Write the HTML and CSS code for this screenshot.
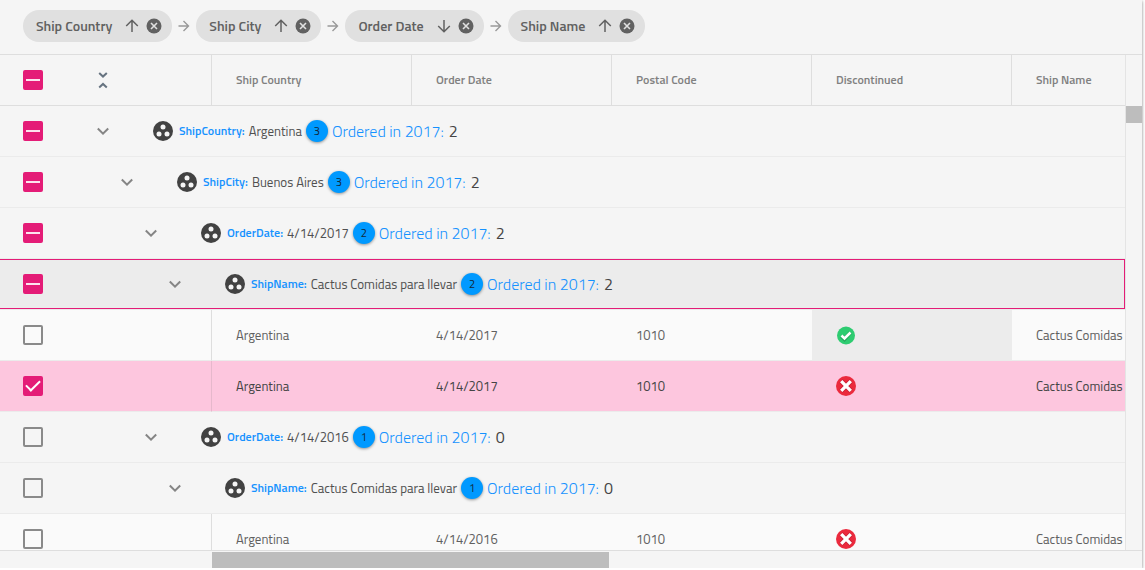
FILE: index.html
```html
<!DOCTYPE html>
<html lang="en">
<head>
<meta charset="utf-8">
<title>Orders</title>
<link rel="stylesheet" href="styles.css">
</head>
<body>
<svg class="sprite" aria-hidden="true">
  <symbol id="up" viewBox="0 0 16 16"><path d="M8 14V2.500M2.200 8 8 2.200l5.800 5.800" fill="none" stroke="currentColor" stroke-width="1.500"/></symbol>
  <symbol id="down" viewBox="0 0 16 16"><path d="M8 2v11.500M2.200 8 8 13.800l5.800-5.800" fill="none" stroke="currentColor" stroke-width="1.500"/></symbol>
  <symbol id="next" viewBox="0 0 12 12"><path d="M.5 6h10M5.500 1l5 5-5 5" fill="none" stroke="currentColor" stroke-width="1.400"/></symbol>
  <symbol id="close" viewBox="0 0 16 16"><circle cx="8" cy="8" r="7.500" fill="currentColor"/><path d="m5 5 6 6M11 5l-6 6" stroke="#e0e0e0" stroke-width="1.600"/></symbol>
  <symbol id="chevron" viewBox="0 0 24 24"><path d="m6.800 9.500 5.200 5.200 5.200-5.200" fill="none" stroke="currentColor" stroke-width="2"/></symbol>
  <symbol id="fold" viewBox="0 0 24 24"><path d="m8.200 5 3.800 3.600 3.800-3.600M8.200 19.500l3.800-3.600 3.800 3.600" fill="none" stroke="currentColor" stroke-width="2"/></symbol>
  <symbol id="group" viewBox="0 0 20 20"><circle cx="10" cy="10" r="10" fill="#424242"/><g fill="#f5f5f5"><circle cx="10" cy="6" r="2.500"/><circle cx="6" cy="13" r="2.500"/><circle cx="14" cy="13" r="2.500"/></g></symbol>
  <symbol id="yes" viewBox="0 0 20 20"><circle cx="10" cy="10.500" r="9" fill="#2ecc71"/><path d="m5.500 11 3 3 6-6.500" fill="none" stroke="#24a65b" stroke-width="4"/><path d="m5.500 10.500 3 3 6-6" fill="none" stroke="#fff" stroke-width="2.600"/></symbol>
  <symbol id="no" viewBox="0 0 20 20"><circle cx="10" cy="10" r="10" fill="#eb2a3d"/><path d="m5 5 10 10M15 5l-10 10" stroke="#c91f35" stroke-width="4.600"/><path d="m5.200 5.200 9.600 9.600M14.800 5.200l-9.600 9.600" stroke="#fff" stroke-width="3.300"/></symbol>
</svg>

<main class="grid">
  <div class="group-area">
    <div class="chip"><span>Ship Country</span><button aria-label="Sort Ship Country"><svg class="i16"><use href="#up"/></svg></button><button aria-label="Remove Ship Country"><svg class="i16"><use href="#close"/></svg></button></div>
    <svg class="next"><use href="#next"/></svg>
    <div class="chip"><span>Ship City</span><button aria-label="Sort Ship City"><svg class="i16"><use href="#up"/></svg></button><button aria-label="Remove Ship City"><svg class="i16"><use href="#close"/></svg></button></div>
    <svg class="next"><use href="#next"/></svg>
    <div class="chip"><span>Order Date</span><button aria-label="Sort Order Date"><svg class="i16"><use href="#down"/></svg></button><button aria-label="Remove Order Date"><svg class="i16"><use href="#close"/></svg></button></div>
    <svg class="next"><use href="#next"/></svg>
    <div class="chip"><span>Ship Name</span><button aria-label="Sort Ship Name"><svg class="i16"><use href="#up"/></svg></button><button aria-label="Remove Ship Name"><svg class="i16"><use href="#close"/></svg></button></div>
  </div>

  <div class="body">
    <div class="viewport">
      <table>
        <colgroup><col class="col-select"><col class="col-data"><col class="col-data"><col class="col-data"><col class="col-data"><col></colgroup>
        <thead>
          <tr>
            <th><div class="line"><input type="checkbox" class="partial" aria-label="Select all"><button class="toggle" aria-label="Collapse all groups"><svg class="i24"><use href="#fold"/></svg></button></div></th>
            <th>Ship Country</th><th>Order Date</th><th>Postal Code</th><th>Discontinued</th><th>Ship Name</th>
          </tr>
        </thead>
        <tbody>
          <tr class="group"><td colspan="6"><div class="line"><input type="checkbox" class="partial" aria-label="Select Argentina"><button class="toggle level-1" aria-label="Collapse"><svg class="i24"><use href="#chevron"/></svg></button><svg class="group-icon"><use href="#group"/></svg><span class="field">ShipCountry:</span><span class="value">Argentina</span><span class="badge">3</span><span class="summary"><span>Ordered in 2017:</span> 2</span></div></td></tr>
          <tr class="group"><td colspan="6"><div class="line"><input type="checkbox" class="partial" aria-label="Select Buenos Aires"><button class="toggle level-2" aria-label="Collapse"><svg class="i24"><use href="#chevron"/></svg></button><svg class="group-icon"><use href="#group"/></svg><span class="field">ShipCity:</span><span class="value">Buenos Aires</span><span class="badge">3</span><span class="summary"><span>Ordered in 2017:</span> 2</span></div></td></tr>
          <tr class="group"><td colspan="6"><div class="line"><input type="checkbox" class="partial" aria-label="Select 4/14/2017"><button class="toggle level-3" aria-label="Collapse"><svg class="i24"><use href="#chevron"/></svg></button><svg class="group-icon"><use href="#group"/></svg><span class="field">OrderDate:</span><span class="value">4/14/2017</span><span class="badge">2</span><span class="summary"><span>Ordered in 2017:</span> 2</span></div></td></tr>
          <tr class="group"><td colspan="6"><div class="line focused"><input type="checkbox" class="partial" aria-label="Select Cactus Comidas para llevar"><button class="toggle level-4" aria-label="Collapse"><svg class="i24"><use href="#chevron"/></svg></button><svg class="group-icon"><use href="#group"/></svg><span class="field">ShipName:</span><span class="value">Cactus Comidas para llevar</span><span class="badge">2</span><span class="summary"><span>Ordered in 2017:</span> 2</span></div></td></tr>
          <tr class="record"><td><div class="line"><input type="checkbox" aria-label="Select row"></div></td><td>Argentina</td><td>4/14/2017</td><td>1010</td><td class="active"><svg class="status" role="img" aria-label="Yes"><use href="#yes"/></svg></td><td>Cactus Comidas</td></tr>
          <tr class="record selected"><td><div class="line"><input type="checkbox" checked aria-label="Select row"></div></td><td>Argentina</td><td>4/14/2017</td><td>1010</td><td><svg class="status" role="img" aria-label="No"><use href="#no"/></svg></td><td>Cactus Comidas</td></tr>
          <tr class="group"><td colspan="6"><div class="line"><input type="checkbox" aria-label="Select 4/14/2016"><button class="toggle level-3" aria-label="Collapse"><svg class="i24"><use href="#chevron"/></svg></button><svg class="group-icon"><use href="#group"/></svg><span class="field">OrderDate:</span><span class="value">4/14/2016</span><span class="badge">1</span><span class="summary"><span>Ordered in 2017:</span> 0</span></div></td></tr>
          <tr class="group"><td colspan="6"><div class="line"><input type="checkbox" aria-label="Select Cactus Comidas para llevar"><button class="toggle level-4" aria-label="Collapse"><svg class="i24"><use href="#chevron"/></svg></button><svg class="group-icon"><use href="#group"/></svg><span class="field">ShipName:</span><span class="value">Cactus Comidas para llevar</span><span class="badge">1</span><span class="summary"><span>Ordered in 2017:</span> 0</span></div></td></tr>
          <tr class="record"><td><div class="line"><input type="checkbox" aria-label="Select row"></div></td><td>Argentina</td><td>4/14/2016</td><td>1010</td><td><svg class="status" role="img" aria-label="No"><use href="#no"/></svg></td><td>Cactus Comidas</td></tr>
        </tbody>
      </table>
    </div>
    <div class="scroll-y"><div class="thumb-y"></div></div>
  </div>
  <div class="scroll-x"><div class="track-x"><div class="thumb-x"></div></div></div>
</main>
</body>
</html>
```

FILE: styles.css
```css
* { box-sizing: border-box; }

body {
  margin: 0;
  background: #fff;
  color: #444;
  font-family: "Titillium Web", Roboto, "Liberation Sans", sans-serif;
  font-size: 13px;
  line-height: 20px;
  overflow: hidden;
}

svg { display: block; flex: none; }
.sprite { position: absolute; width: 0; height: 0; }
.i16 { width: 16px; height: 16px; }
.i24 { width: 24px; height: 24px; }

button {
  padding: 0;
  border: 0;
  background: none;
  color: inherit;
  flex: none;
}

.grid {
  display: flex;
  flex-direction: column;
  height: calc(100vh - 2px);
  margin-right: 3px;
  background: #f5f5f5;
  box-shadow: 0 1px 3px rgba(0, 0, 0, .5);
}

/* Group-by chips */
.group-area {
  display: flex;
  align-items: center;
  padding: 10px 23px 12px;
  border-bottom: 1px solid #dedede;
}
.chip {
  display: flex;
  align-items: center;
  gap: 6px;
  height: 32px;
  padding: 0 10px 0 13px;
  border-radius: 16px;
  background: #e0e0e0;
  color: #616161;
  font-size: 14px;
  font-weight: 600;
}
.chip span { margin-right: 6px; }
.next {
  width: 12px;
  height: 12px;
  margin: 0 6px;
  color: #999;
}

/* Table */
.body {
  display: flex;
  flex: 1;
  min-height: 0;
}
.viewport {
  flex: 1;
  min-width: 0;
  overflow: hidden;
}
table {
  width: 100%;
  table-layout: fixed;
  border-spacing: 0;
}
.col-select { width: 212px; }
.col-data { width: 200px; }
th, td {
  height: 51px;
  padding: 0 0 0 24px;
  text-align: left;
  white-space: nowrap;
  border-bottom: 1px solid #ebebeb;
}
th {
  color: #808080;
  font-size: 12px;
  font-weight: 600;
  border-right: 1px solid #dedede;
  border-bottom-color: #dedede;
}
th:last-child { border-right: 0; }
th:first-child, td:first-child { padding: 0; }

.line {
  display: flex;
  align-items: center;
  height: 50px;
  padding-left: 23px;
}
.focused {
  background: #ececec;
  border: 1px solid #e41c77;
  border-left: 0;
}

.record { background: #fafafa; color: #606060; }
.record td:first-child { border-right: 1px solid #dedede; }
.record .active { background: #ececec; }
.selected { background: #fdc6de; color: #444; }
.selected td:first-child { border-right-color: #e6b8cc; }

input[type="checkbox"] {
  appearance: none;
  display: flex;
  align-items: center;
  justify-content: center;
  flex: none;
  width: 20px;
  height: 20px;
  margin: 0;
  border: 2px solid #8a8a8a;
  border-radius: 2px;
}
input.partial, input[type="checkbox"]:checked {
  border-color: #e41c77;
  background: #e41c77;
}
input.partial::before {
  content: "";
  width: 14px;
  height: 2px;
  background: #fce4ee;
}
input:checked::before {
  content: "";
  width: 12px;
  height: 6px;
  margin-bottom: 4px;
  border: solid #fff;
  border-width: 0 0 2px 2px;
  transform: rotate(-45deg);
}

.toggle { margin-left: 48px; color: #858585; }
th .toggle { color: #667380; }
.level-2 { margin-left: 72px; }
.level-3 { margin-left: 96px; }
.level-4 { margin-left: 120px; }

.group-icon {
  width: 20px;
  height: 20px;
  margin: 0 6px 0 38px;
}
.field {
  margin-right: 4px;
  color: #1592ff;
  font-size: 12px;
  font-weight: 600;
}
.value { color: #505050; }
.badge {
  width: 22px;
  height: 22px;
  margin: 0 4px;
  border-radius: 50%;
  background: #0099ff;
  box-shadow: 0 1px 3px rgba(0, 0, 0, .4);
  color: #12283a;
  font-size: 11px;
  line-height: 22px;
  text-align: center;
}
.summary {
  display: flex;
  gap: 5px;
  font-size: 16px;
}
.summary span { color: #1592ff; font-weight: 300; }
.status { width: 20px; height: 20px; }

/* Scrollbars */
.scroll-y {
  width: 17px;
  padding-top: 51px;
  border-left: 1px solid #e4e4e4;
}
.thumb-y { height: 17px; background: #bdbdbd; }
.scroll-x {
  padding: 1px 17px 0 212px;
  border-top: 1px solid #dedede;
}
.track-x { height: 16px; }
.thumb-x {
  width: 43.5%;
  height: 16px;
  background: #bdbdbd;
}
```
